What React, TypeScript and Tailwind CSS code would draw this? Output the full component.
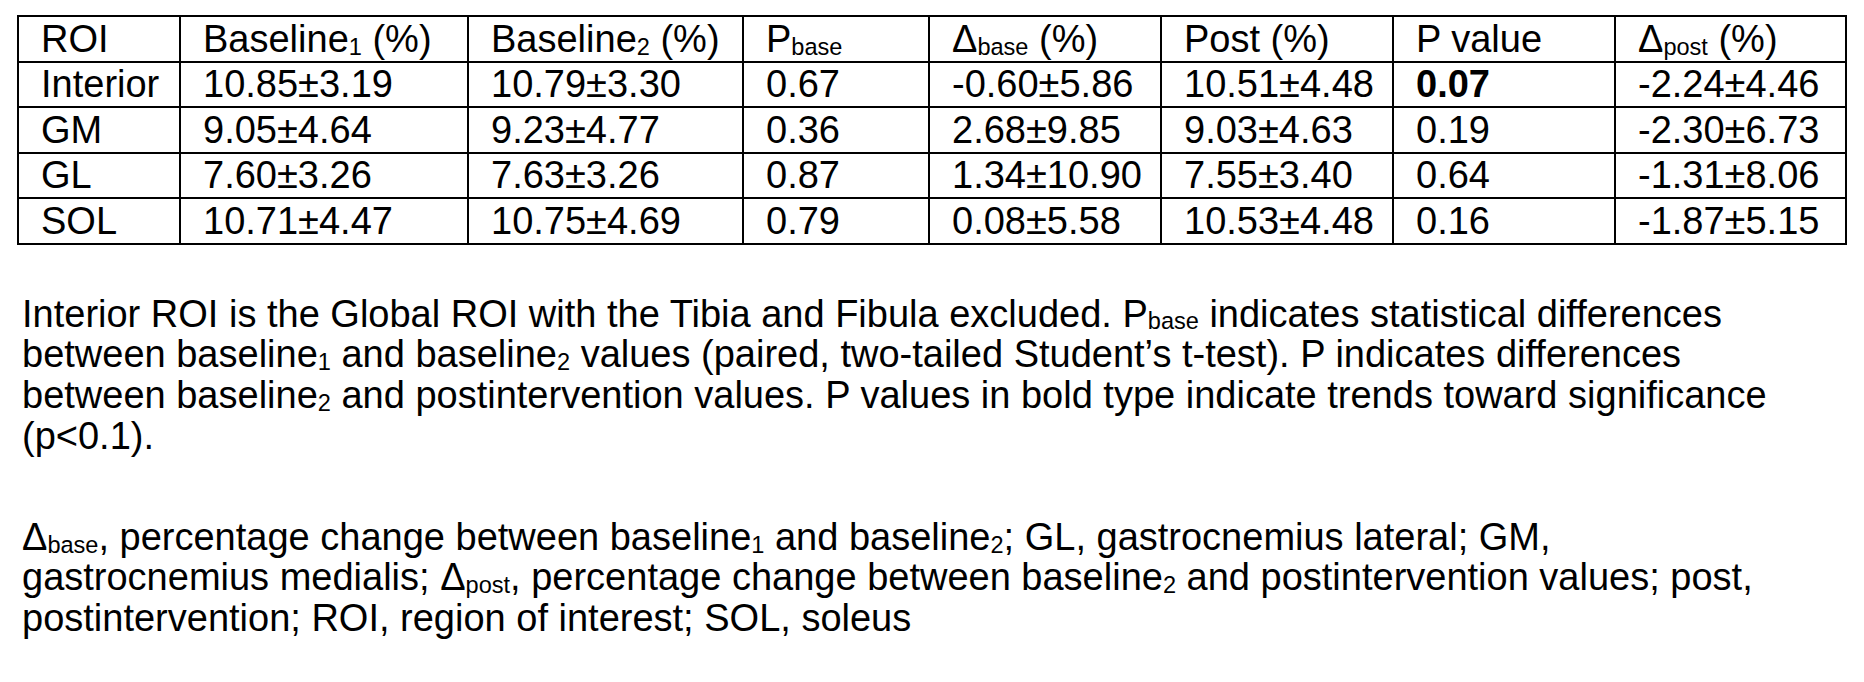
const rows = [
  { roi: 'Interior', b1: '10.85±3.19', b2: '10.79±3.30', pb: '0.67', db: '-0.60±5.86', post: '10.51±4.48', p: '0.07', dp: '-2.24±4.46', bold: true },
  { roi: 'GM', b1: '9.05±4.64', b2: '9.23±4.77', pb: '0.36', db: '2.68±9.85', post: '9.03±4.63', p: '0.19', dp: '-2.30±6.73' },
  { roi: 'GL', b1: '7.60±3.26', b2: '7.63±3.26', pb: '0.87', db: '1.34±10.90', post: '7.55±3.40', p: '0.64', dp: '-1.31±8.06' },
  { roi: 'SOL', b1: '10.71±4.47', b2: '10.75±4.69', pb: '0.79', db: '0.08±5.58', post: '10.53±4.48', p: '0.16', dp: '-1.87±5.15' },
];

const colWidths = ['w-[162px]', 'w-[288px]', 'w-[275px]', 'w-[186px]', 'w-[232px]', 'w-[232px]', 'w-[222px]', 'w-[231px]'];

function Sub({ children }: { children: React.ReactNode }) {
  return <sub className="text-[0.62em] bottom-[-0.12em]">{children}</sub>;
}

function Cell({ children, bold }: { children: React.ReactNode; bold?: boolean }) {
  return (
    <td className={`border-2 border-black h-[45.5px] pl-[22px] pr-1 py-0 align-middle whitespace-nowrap leading-none ${bold ? 'font-bold' : ''}`}>
      {children}
    </td>
  );
}

export default function App() {
  return (
    <div className="min-h-screen bg-white text-black pl-[17px] pt-[15px] font-['Liberation_Sans',Arial,sans-serif]">
      {/* Results table */}
      <table className="table-fixed border-collapse w-[1829px] text-[38px]">
        <colgroup>
          {colWidths.map((w, i) => (
            <col key={i} className={w} />
          ))}
        </colgroup>
        <tbody>
          <tr>
            <Cell>ROI</Cell>
            <Cell>Baseline<Sub>1</Sub> (%)</Cell>
            <Cell>Baseline<Sub>2</Sub> (%)</Cell>
            <Cell>P<Sub>base</Sub></Cell>
            <Cell>Δ<Sub>base</Sub> (%)</Cell>
            <Cell>Post (%)</Cell>
            <Cell>P value</Cell>
            <Cell>Δ<Sub>post</Sub> (%)</Cell>
          </tr>
          {rows.map((r) => (
            <tr key={r.roi}>
              <Cell>{r.roi}</Cell>
              <Cell>{r.b1}</Cell>
              <Cell>{r.b2}</Cell>
              <Cell>{r.pb}</Cell>
              <Cell>{r.db}</Cell>
              <Cell>{r.post}</Cell>
              <Cell bold={r.bold}>{r.p}</Cell>
              <Cell>{r.dp}</Cell>
            </tr>
          ))}
        </tbody>
      </table>

      {/* Footnotes */}
      <div className="pl-[5px] text-[38px] leading-[40.8px] whitespace-nowrap">
        <p className="mt-[49px]">
          Interior ROI is the Global ROI with the Tibia and Fibula excluded. P<Sub>base</Sub> indicates statistical differences
          <br />
          between baseline<Sub>1</Sub> and baseline<Sub>2</Sub> values (paired, two-tailed Student’s t-test). P indicates differences
          <br />
          between baseline<Sub>2</Sub> and postintervention values. P values in bold type indicate trends toward significance
          <br />
          (p&lt;0.1).
        </p>
        <p className="mt-[60px]">
          Δ<Sub>base</Sub>, percentage change between baseline<Sub>1</Sub> and baseline<Sub>2</Sub>; GL, gastrocnemius lateral; GM,
          <br />
          gastrocnemius medialis; Δ<Sub>post</Sub>, percentage change between baseline<Sub>2</Sub> and postintervention values; post,
          <br />
          postintervention; ROI, region of interest; SOL, soleus
        </p>
      </div>
    </div>
  );
}
